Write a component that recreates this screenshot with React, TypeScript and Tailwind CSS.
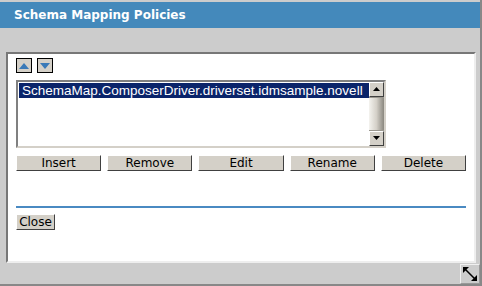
import React from 'react';

const btn =
	'h-[16px] bg-[#d4d0c8] border border-t-[#ffffff] border-l-[#ffffff] border-r-[#404040] border-b-[#404040] text-[12px] leading-[14px] text-black flex items-center justify-center';

const ArrowButton = ({ up }: { up?: boolean }) => (
	<div className="w-[16px] h-[15px] bg-[#d4d0c8] border border-black flex items-center justify-center">
		<svg width="12" height="8" viewBox="0 0 12 8">
			{up ? <polygon points="6,1 11,7 1,7" fill="#3a7ab8" /> : <polygon points="1,1 11,1 6,7" fill="#3a7ab8" />}
		</svg>
	</div>
);

const ScrollArrow = ({ up }: { up?: boolean }) => (
	<div className="w-[15px] h-[15px] bg-[#d4d0c8] border border-t-white border-l-white border-r-[#404040] border-b-[#404040] flex items-center justify-center">
		<svg width="7" height="5" viewBox="0 0 7 5">
			{up ? <polygon points="3.5,0 7,4 0,4" fill="black" /> : <polygon points="0,0 7,0 3.5,4" fill="black" />}
		</svg>
	</div>
);

export default function App() {
	return (
		<div
			className="w-[482px] h-[286px] bg-[#cccccc] border-r-2 border-b-2 border-[#888888] pt-[2px] flex flex-col"
			style={{ fontFamily: '"DejaVu Sans", Verdana, sans-serif' }}
		>
			<div className="h-[26px] bg-[#4489bb] flex items-center pl-[14px]">
				<span className="text-white font-bold text-[12px]">Schema Mapping Policies</span>
			</div>

			<div className="h-[24px]" />

			<div className="ml-[6px] mr-[4px] h-[211px] bg-white border-2 border-t-[#777777] border-l-[#777777] border-r-[#eeeeee] border-b-[#eeeeee] pl-[8px] pr-[8px] pt-[4px] flex flex-col">
				<div className="flex gap-[5px]">
					<ArrowButton up />
					<ArrowButton />
				</div>

				<div className="mt-[7px] w-[370px] h-[68px] border-2 border-t-[#808080] border-l-[#808080] border-r-[#d4d0c8] border-b-[#d4d0c8] flex">
					<div className="flex-1 pt-[1px] pl-[1px]">
						<div
							className="h-[15px] bg-[#0a246a] text-white text-[13.5px] leading-[15px] pl-[3px] whitespace-nowrap overflow-hidden"
							style={{ fontFamily: '"Liberation Sans", Arial, sans-serif' }}
						>
							SchemaMap.ComposerDriver.driverset.idmsample.novell
						</div>
					</div>
					<div className="w-[15px] flex flex-col">
						<ScrollArrow up />
						<div className="flex-1 bg-gradient-to-r from-[#f4f3ef] via-[#d4d0c8] to-[#8a877f] border-y border-[#9a978f]" />
						<ScrollArrow />
					</div>
				</div>

				<div className="mt-[7px] flex gap-[6px]">
					{['Insert', 'Remove', 'Edit', 'Rename', 'Delete'].map((l) => (
						<div key={l} className={`${btn} w-[86px]`}>
							{l}
						</div>
					))}
				</div>

				<div className="mt-[35px] h-[2px] w-[450px] bg-[#4a8ac2]" />

				<div className="mt-[6px] flex">
					<div className={`${btn} w-[39px]`}>Close</div>
				</div>
			</div>

			<div className="flex-1 flex justify-end items-end">
				<div className="w-[20px] h-[20px] border border-t-[#f0f0f0] border-l-[#f0f0f0] border-r-[#999999] border-b-[#999999] flex items-center justify-center">
					<svg width="16" height="16" viewBox="0 0 16 16">
						<line x1="3" y1="3" x2="13" y2="13" stroke="black" strokeWidth="1.5" />
						<polygon points="1,1 7,1 1,7" fill="black" />
						<polygon points="15,15 9,15 15,9" fill="black" />
					</svg>
				</div>
			</div>
		</div>
	);
}
